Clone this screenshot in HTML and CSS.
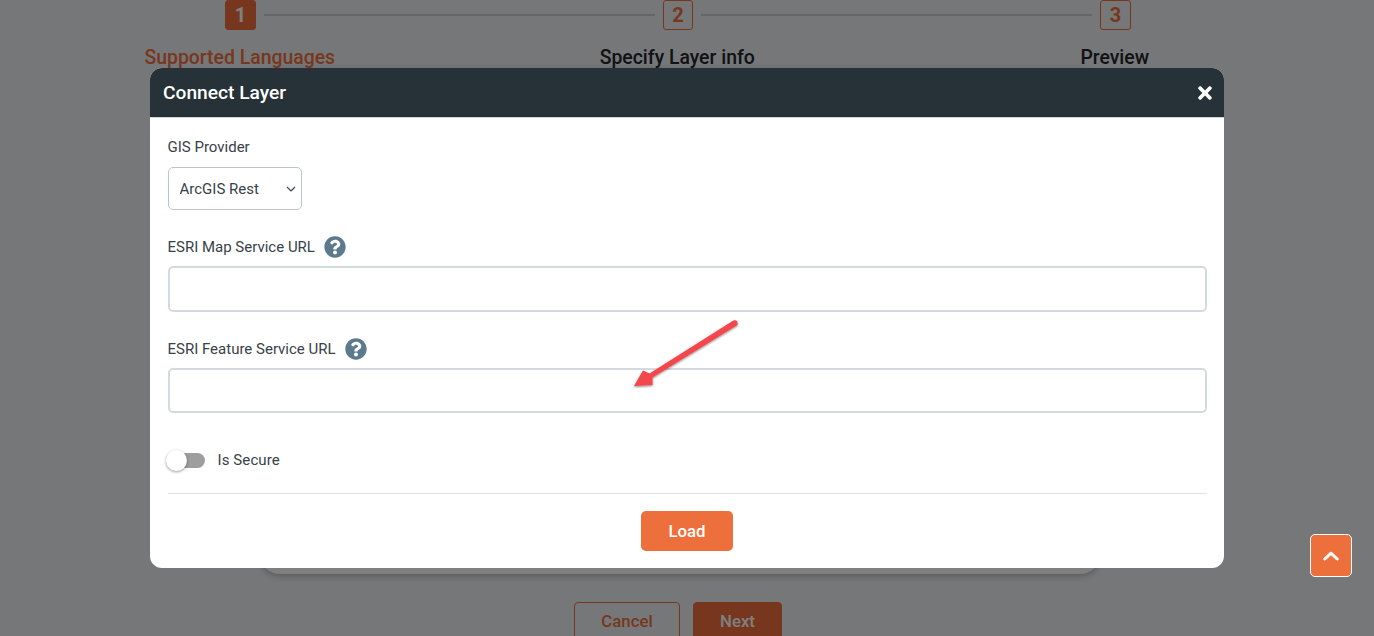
FILE: index.html
```html
<!DOCTYPE html>
<html lang="en">
<head>
    <meta charset="UTF-8">
    <meta name="viewport" content="width=device-width, initial-scale=1.0">
    <title>Connect Layer</title>
    <link rel="stylesheet" href="styles.css">
</head>
<body>
    <div class="page">
        <div class="track">
            <span class="step-box active">1</span>
            <span class="step-line"></span>
            <span class="step-box step-box-narrow">2</span>
            <span class="step-line"></span>
            <span class="step-box">3</span>
        </div>
        <div class="step-labels">
            <span class="active">Supported Languages</span>
            <span>Specify Layer info</span>
            <span>Preview</span>
        </div>
        <div class="card"></div>
        <div class="page-actions">
            <button type="button" class="btn-outline">Cancel</button>
            <button type="button" class="btn-solid">Next</button>
        </div>
    </div>

    <div class="overlay">
        <div class="modal">
            <div class="modal-header">
                <h2>Connect Layer</h2>
                <svg class="close" viewBox="0 0 352 512" aria-label="Close"><path d="M242.72 256l100.07-100.07c12.28-12.28 12.28-32.19 0-44.48l-22.24-22.24c-12.28-12.28-32.19-12.28-44.48 0L176 189.28 75.93 89.21c-12.28-12.28-32.19-12.28-44.48 0L9.21 111.45c-12.28 12.28-12.28 32.19 0 44.48L109.28 256 9.21 356.07c-12.28 12.28-12.28 32.19 0 44.48l22.24 22.24c12.28 12.28 32.2 12.28 44.48 0L176 322.72l100.07 100.07c12.28 12.28 32.2 12.28 44.48 0l22.24-22.24c12.28-12.28 12.28-32.19 0-44.48L242.72 256z"/></svg>
            </div>
            <form class="modal-body">
                <label class="field-label" for="provider">GIS Provider</label>
                <select id="provider" class="provider">
                    <option>ArcGIS Rest</option>
                </select>

                <label class="field-label help-label" for="mapUrl">ESRI Map Service URL
                    <svg class="help" viewBox="0 0 512 512"><path d="M504 256c0 136.997-111.043 248-248 248S8 392.997 8 256C8 119.083 119.043 8 256 8s248 111.083 248 248zM262.655 90c-54.497 0-89.255 22.957-116.549 63.758-3.536 5.286-2.353 12.415 2.715 16.258l34.699 26.31c5.205 3.947 12.621 3.008 16.665-2.122 17.864-22.658 30.113-35.797 57.303-35.797 20.429 0 45.698 13.148 45.698 32.958 0 14.976-12.363 22.667-32.534 33.976C247.128 238.528 216 254.941 216 296v4c0 6.627 5.373 12 12 12h56c6.627 0 12-5.373 12-12v-1.333c0-28.462 83.186-29.647 83.186-106.667 0-58.002-60.165-102-116.531-102zM256 338c-25.365 0-46 20.635-46 46 0 25.364 20.635 46 46 46s46-20.636 46-46c0-25.365-20.635-46-46-46z"/></svg>
                </label>
                <input type="text" id="mapUrl" class="text-input">

                <label class="field-label help-label" for="featureUrl">ESRI Feature Service URL
                    <svg class="help" viewBox="0 0 512 512"><path d="M504 256c0 136.997-111.043 248-248 248S8 392.997 8 256C8 119.083 119.043 8 256 8s248 111.083 248 248zM262.655 90c-54.497 0-89.255 22.957-116.549 63.758-3.536 5.286-2.353 12.415 2.715 16.258l34.699 26.31c5.205 3.947 12.621 3.008 16.665-2.122 17.864-22.658 30.113-35.797 57.303-35.797 20.429 0 45.698 13.148 45.698 32.958 0 14.976-12.363 22.667-32.534 33.976C247.128 238.528 216 254.941 216 296v4c0 6.627 5.373 12 12 12h56c6.627 0 12-5.373 12-12v-1.333c0-28.462 83.186-29.647 83.186-106.667 0-58.002-60.165-102-116.531-102zM256 338c-25.365 0-46 20.635-46 46 0 25.364 20.635 46 46 46s46-20.636 46-46c0-25.365-20.635-46-46-46z"/></svg>
                </label>
                <input type="text" id="featureUrl" class="text-input text-input-last">

                <div class="secure-row">
                    <span class="switch"><span class="switch-thumb"></span></span>
                    <span class="secure-text">Is Secure</span>
                </div>

                <div class="modal-footer">
                    <button type="button" class="btn-load">Load</button>
                </div>
            </form>
        </div>
    </div>

    <svg class="annotation" viewBox="0 0 130 90" aria-hidden="true">
        <defs>
            <filter id="arrowShadow" x="-20%" y="-20%" width="140%" height="140%">
                <feDropShadow dx="0" dy="1" stdDeviation="1.200" flood-color="#000" flood-opacity="0.5"/>
            </filter>
        </defs>
        <path filter="url(#arrowShadow)" fill="#f5474b" d="M8 72 17 56.500 23.500 59.500 107.400 6.500A3 3 0 0 1 110.600 11.500L26.500 63.500 26.500 71Z"/>
    </svg>

    <button type="button" class="to-top" aria-label="Back to top">
        <svg viewBox="0 0 16 10"><path d="M1.800 8 8 2.200 14.200 8" fill="none" stroke="#fff" stroke-width="3" stroke-linecap="round" stroke-linejoin="round"/></svg>
    </button>
</body>
</html>
```

FILE: styles.css
```css
* {
    box-sizing: border-box;
}
html, body {
    height: 100%;
}
body {
    margin: 0;
    overflow: hidden;
    background: #eceef2;
    font-family: Roboto, Arial, sans-serif;
    color: #212529;
}

/* page behind the dialog */
.page {
    height: 100%;
}
.track {
    display: flex;
    align-items: center;
    width: 906px;
    margin-left: 225px;
}
.step-box {
    flex: none;
    width: 31px;
    height: 30px;
    display: flex;
    align-items: center;
    justify-content: center;
    border: 1px solid #ed6f3c;
    border-radius: 3px;
    color: #ed6f3c;
    font-size: 20px;
    font-weight: 700;
}
.step-box-narrow {
    width: 30px;
}
.step-box.active {
    background: #ed6f3c;
    color: #fff;
}
.step-line {
    flex: 1;
    height: 2px;
    margin: 0 8px;
    background: #ccc;
}
.step-labels {
    display: grid;
    grid-template-columns: repeat(3, 437.5px);
    margin: 15px 0 0 21px;
    text-align: center;
    font-size: 19.400px;
    font-weight: 500;
    line-height: 25px;
}
.step-labels .active {
    color: #ed6f3c;
}
.card {
    width: 840px;
    height: 506px;
    margin: -2px 0 0 260px;
    background: #fff;
    border-radius: 20px;
    box-shadow: 0 2px 6px rgba(0, 0, 0, 0.25);
}
.page-actions {
    display: flex;
    gap: 13px;
    margin: 28px 0 0 574px;
}
.btn-outline, .btn-solid {
    height: 40px;
    padding-bottom: 3px;
    border-radius: 4px;
    border: 1px solid #ed6f3c;
    font-family: inherit;
    font-size: 16.800px;
    font-weight: 500;
}
.btn-outline {
    width: 106px;
    background: transparent;
    color: #ed6f3c;
}
.btn-solid {
    width: 89px;
    background: #ed6f3c;
    color: #fff;
}

/* dialog */
.overlay {
    position: fixed;
    inset: 0;
    background: rgba(0, 0, 0, 0.5);
    display: flex;
    justify-content: center;
    align-items: flex-start;
    padding: 68px 0 0;
}
.modal {
    width: 1074px;
    height: 500px;
    background: #fff;
    border-radius: 12px;
    overflow: hidden;
}
.modal-header {
    height: 50px;
    display: flex;
    align-items: center;
    justify-content: space-between;
    padding: 0 12px 0 13px;
    background: #263238;
    border-bottom: 1px solid #ced4da;
}
.modal-header h2 {
    margin: 0;
    color: #fff;
    font-size: 19.200px;
    font-weight: 500;
}
.close {
    width: 14px;
    height: 20px;
    fill: #fff;
}
.modal-body {
    display: flex;
    flex-direction: column;
    padding: 19px 17.500px 0;
}
.field-label {
    display: flex;
    align-items: center;
    gap: 9px;
    height: 20px;
    font-size: 15px;
    color: #37424a;
}
.provider {
    appearance: none;
    width: 134px;
    height: 43px;
    margin: 10px 0 27px;
    padding: 0 24px 0 11px;
    border: 1px solid #bcc5cd;
    border-radius: 5px;
    background: #fff url("data:image/svg+xml,%3Csvg xmlns='http://www.w3.org/2000/svg' viewBox='0 0 10 6'%3E%3Cpath d='M1 1l4 4 4-4' fill='none' stroke='%2337424a' stroke-width='1.100'/%3E%3C/svg%3E") no-repeat right 5px center / 10px 6px;
    color: #37424a;
    font-family: inherit;
    font-size: 15px;
}
.help {
    width: 22px;
    height: 22px;
    fill: #5c7a8e;
}
.text-input {
    width: 100%;
    height: 46px;
    margin: 9px 0 27px;
    border: 2px solid #d3dade;
    border-radius: 5px;
    background: #fff;
}
.text-input-last {
    height: 45px;
    margin-bottom: 25px;
}
.secure-row {
    display: flex;
    align-items: center;
    gap: 13px;
    height: 24px;
    margin-top: 10px;
    font-size: 15px;
    color: #37424a;
}
.secure-text {
    letter-spacing: 0.1px;
}
.switch {
    position: relative;
    width: 37px;
    height: 15px;
    border-radius: 8px;
    background: #9e9e9e;
}
.switch-thumb {
    position: absolute;
    left: -2px;
    top: -3px;
    width: 21px;
    height: 21px;
    border-radius: 50%;
    background: #fff;
    box-shadow: 0 1px 3px rgba(0, 0, 0, 0.4);
}
.modal-footer {
    display: flex;
    justify-content: center;
    margin-top: 21px;
    padding-top: 17px;
    border-top: 1px solid #e2e2e2;
}
.btn-load {
    width: 92px;
    height: 40px;
    border: none;
    border-radius: 5px;
    background: #ed6f3c;
    color: #fff;
    font-family: inherit;
    font-size: 16.800px;
    font-weight: 500;
}

/* screenshot annotation, floats over the form */
.annotation {
    position: fixed;
    left: 626px;
    top: 314px;
    width: 130px;
    height: 90px;
}
.to-top {
    position: fixed;
    left: 1310px;
    top: 534px;
    width: 42px;
    height: 43px;
    display: flex;
    align-items: center;
    justify-content: center;
    padding: 0;
    border: 1px solid #fff;
    border-radius: 5px;
    background: #ed6f3c;
}
.to-top svg {
    width: 16px;
    height: 10px;
}
```
